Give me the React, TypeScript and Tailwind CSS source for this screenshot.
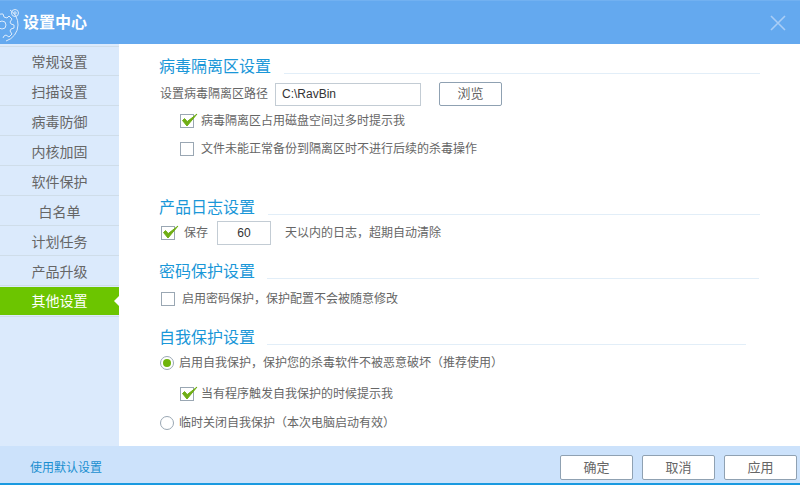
import React from "react";

const MENU = ["常规设置", "扫描设置", "病毒防御", "内核加固", "软件保护", "白名单", "计划任务", "产品升级", "其他设置"];

/** 绿色对勾复选框 */
const CheckBox = ({ checked = false }: { checked?: boolean }) => (
  <span className="relative block w-[14px] h-[14px] shrink-0 border border-[#9aa7b3] bg-white">
    {checked && (
      <svg className="absolute left-[0px] top-[-3px]" width="17" height="16" viewBox="0 0 17 16">
        <path d="M1.5 8.5 L6 14 L16 2 L6.2 9.6 L3.6 6.6 Z" fill="#6fae14" stroke="#6fae14" strokeWidth="1" strokeLinejoin="round" />
      </svg>
    )}
  </span>
);

const Radio = ({ checked = false }: { checked?: boolean }) => (
  <span className="flex items-center justify-center w-[14px] h-[14px] shrink-0 rounded-full border border-[#9aa7b3] bg-white">
    {checked && <span className="block w-[8px] h-[8px] rounded-full bg-[#6fb40a]" />}
  </span>
);

const Heading = ({ title, lineClass }: { title: string; lineClass: string }) => (
  <div className="flex items-end h-[24px]">
    <span className="text-[16px] leading-[24px] text-[#1a97d8]">{title}</span>
    <span className={`h-px bg-[#e2eef8] mb-[5px] ${lineClass}`} />
  </div>
);

const Button = ({ label, className }: { label: string; className: string }) => (
  <button className={`flex items-center justify-center rounded-[2px] border border-[#8fa1b2] bg-white text-[13px] text-[#666] ${className}`}>
    {label}
  </button>
);

export default function App() {
  return (
    <div
      className="flex flex-col w-[800px] h-[485px] overflow-hidden bg-white text-[12px] text-[#666]"
      style={{ fontFamily: '"Liberation Sans", "Noto Sans CJK SC", sans-serif' }}
    >
      {/* 标题栏 */}
      <div className="flex items-center justify-between h-[44px] shrink-0 bg-[#64a9ef] border-t border-[#72b1f1]">
        <div className="flex items-center">
          <svg width="23" height="38" viewBox="0 0 23 38" fill="none" stroke="#dcebfb" strokeWidth="1">
            <circle cx="2" cy="21" r="4" />
            <path d="M-3 11 L1 10 L3 10 L4 13 L7 14 L9 12 L12 15 L10 18 L11 20 L14 21 L14 24 L11 25 L10 27 L12 30 L9 33 L6 31 L4 32 L3 34" />
            <path d="M10 6 A18 18 0 0 1 18 21 A17 17 0 0 1 6 37" />
            <circle cx="15" cy="9" r="3.5" />
            <circle cx="15" cy="9" r="1.2" />
          </svg>
          <span className="text-[16px] font-bold text-white">设置中心</span>
        </div>
        <svg className="mr-[14px] mt-[1px]" width="16" height="16" viewBox="0 0 16 16" stroke="#a9cdf6" strokeWidth="1.6">
          <path d="M1 1 L15 15 M15 1 L1 15" />
        </svg>
      </div>

      <div className="flex flex-1 min-h-0">
        {/* 左侧菜单 */}
        <div className="w-[119px] shrink-0 pt-[2px] bg-[#dbeafc]">
          {MENU.map((item, i) => {
            const active = i === MENU.length - 1;
            return (
              <div key={item} className="h-[30px] border-b border-[#cfdde9] first:border-t">
                {active ? (
                  <div className="relative flex items-center justify-center h-[28px] mt-px bg-[#6cc500] text-[14px] text-white">
                    {item}
                    <span className="absolute right-0 top-[9px] border-y-[5px] border-r-[5px] border-y-transparent border-r-white" />
                  </div>
                ) : (
                  <div className="flex items-center justify-center h-full pt-[3px] text-[14px] text-[#666]">{item}</div>
                )}
              </div>
            );
          })}
        </div>

        {/* 内容区 */}
        <div className="flex-1 pl-[40px] pt-[11px]">
          <Heading title="病毒隔离区设置" lineClass="ml-[13px] w-[476px]" />
          <div className="flex items-center h-[24px] mt-[3px] ml-px">
            <span className="w-[115px]">设置病毒隔离区路径</span>
            <div className="flex items-center w-[146px] h-[23px] pl-[6px] border border-[#c3ccd4] text-[12px] text-[#333]">C:\RavBin</div>
            <Button label="浏览" className="w-[63px] h-[24px] ml-[18px]" />
          </div>
          <div className="flex items-center h-[14px] mt-[8px] ml-[21px] gap-[7px]">
            <CheckBox checked />
            <span>病毒隔离区占用磁盘空间过多时提示我</span>
          </div>
          <div className="flex items-center h-[14px] mt-[14px] ml-[21px] gap-[7px]">
            <CheckBox />
            <span>文件未能正常备份到隔离区时不进行后续的杀毒操作</span>
          </div>

          <div className="mt-[40px]">
            <Heading title="产品日志设置" lineClass="ml-[13px] w-[492px]" />
          </div>
          <div className="flex items-center h-[24px] mt-[1px] ml-[2px]">
            <CheckBox checked />
            <span className="ml-[9px] w-[33px]">保存</span>
            <div className="flex items-center justify-center w-[54px] h-[24px] border border-[#c3ccd4] text-[#333]">60</div>
            <span className="ml-[14px]">天以内的日志，超期自动清除</span>
          </div>

          <div className="mt-[15px]">
            <Heading title="密码保护设置" lineClass="ml-[12px] w-[492px]" />
          </div>
          <div className="flex items-center h-[14px] mt-[8px] ml-[2px] gap-[7px]">
            <CheckBox />
            <span>启用密码保护，保护配置不会被随意修改</span>
          </div>

          <div className="mt-[20px]">
            <Heading title="自我保护设置" lineClass="ml-[12px] w-[479px]" />
          </div>
          <div className="flex items-center h-[14px] mt-[6px] ml-px gap-[5px]">
            <Radio checked />
            <span>启用自我保护，保护您的杀毒软件不被恶意破坏（推荐使用）</span>
          </div>
          <div className="flex items-center h-[14px] mt-[17px] ml-[21px] gap-[7px]">
            <CheckBox checked />
            <span>当有程序触发自我保护的时候提示我</span>
          </div>
          <div className="flex items-center h-[14px] mt-[15px] ml-px gap-[5px]">
            <Radio />
            <span>临时关闭自我保护（本次电脑启动有效）</span>
          </div>
        </div>
      </div>

      {/* 底部栏 */}
      <div className="flex items-center justify-between h-[39px] shrink-0 pl-[30px] pr-[3px] pt-[7px] pb-px bg-[#cce2fb] border-b-2 border-[#1a9ae0]">
        <span className="text-[#1a8fd0]">使用默认设置</span>
        <div className="flex gap-[9px]">
          <Button label="确定" className="w-[73px] h-[25px]" />
          <Button label="取消" className="w-[73px] h-[25px]" />
          <Button label="应用" className="w-[73px] h-[25px]" />
        </div>
      </div>
    </div>
  );
}
